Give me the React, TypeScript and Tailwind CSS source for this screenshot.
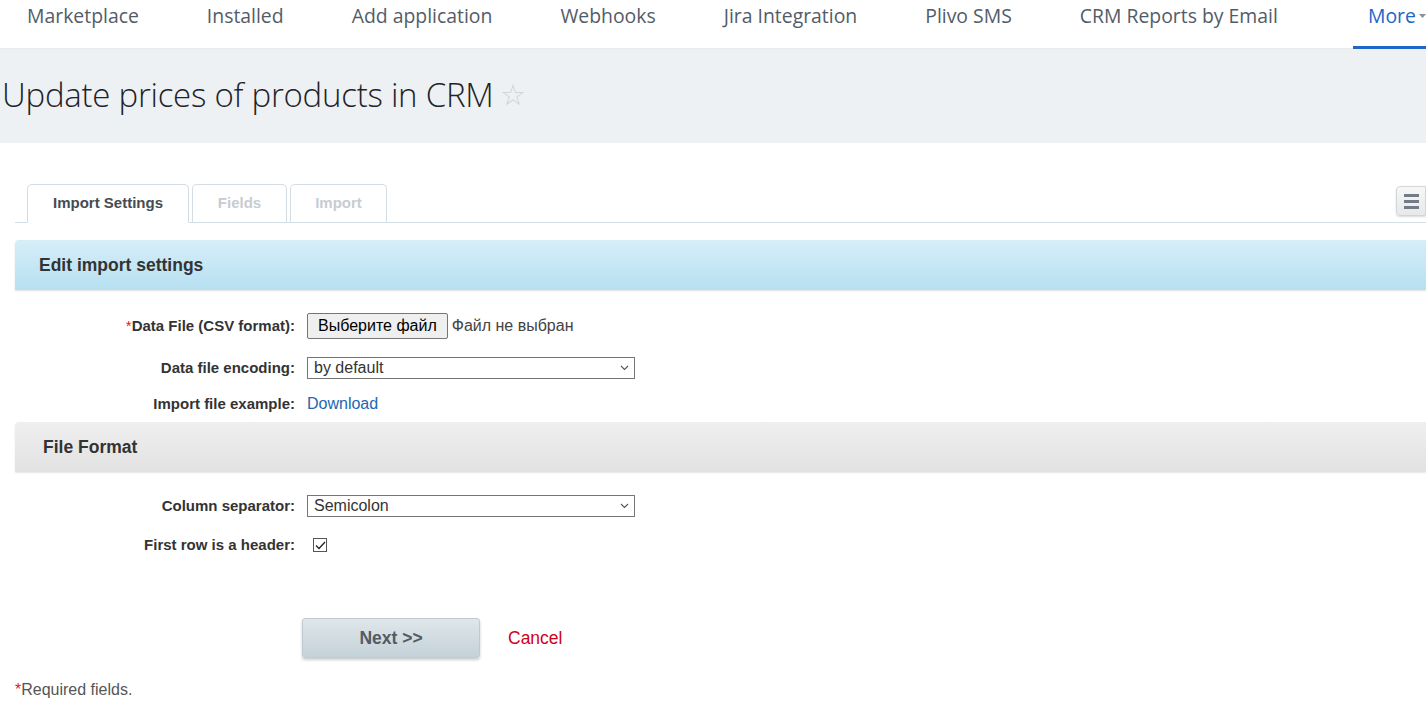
import React from 'react';

const navItems = ['Marketplace', 'Installed', 'Add application', 'Webhooks', 'Jira Integration', 'Plivo SMS', 'CRM Reports by Email'];

const Label: React.FC<{ children: React.ReactNode; required?: boolean }> = ({ children, required }) => (
    <div className="w-[295px] shrink-0 text-right text-[15px] font-bold text-[#333]">
        {required && <span className="text-[#e4171b] font-normal">*</span>}
        {children}
    </div>
);

const Select: React.FC<{ value: string }> = ({ value }) => (
    <div className="ml-3 w-[328px] h-[22px] border border-[#767676] bg-white flex items-center justify-between pl-[6px] pr-[5px] text-[16px] text-[#333]">
        <span>{value}</span>
        <svg width="9" height="6" viewBox="0 0 9 6" className="text-[#555]">
            <path d="M1 1l3.5 3.5L8 1" fill="none" stroke="currentColor" strokeWidth="1.1" />
        </svg>
    </div>
);

const App: React.FC = () => {
    return (
        <div className="min-h-screen bg-white font-['Liberation_Sans',Arial,sans-serif] overflow-hidden">
            {/* top navigation */}
            <div className="h-[49px] border-b border-[#e8ebee] flex items-stretch font-['Open_Sans',sans-serif] text-[19.4px] text-[#525c68]">
                <div className="flex items-start pl-[27px] pt-[1px]">
                    {navItems.map((item) => (
                        <span key={item} className="mr-[68px] whitespace-nowrap">{item}</span>
                    ))}
                </div>
                <div className="ml-auto w-[73px] border-b-[3px] border-[#2066c9] -mb-px flex items-start pl-[15px] pt-[1px] text-[#2066c9] whitespace-nowrap">
                    More
                    <svg width="7" height="4" viewBox="0 0 7 4" className="ml-[3px] mt-[13px]">
                        <path d="M0 0h7L3.5 4z" fill="#8a9099" />
                    </svg>
                </div>
            </div>

            {/* title */}
            <div className="h-[94px] bg-[#eef1f4] flex items-center pl-[2px] pb-[3px]">
                <h1 className="font-['Open_Sans',sans-serif] font-light text-[33px] text-[#1f2328] tracking-[-0.25px]">Update prices of products in CRM</h1>
                <span className="ml-[7px] text-[29px] text-[#cdd1d5] leading-none mt-[2px]">☆</span>
            </div>

            {/* tabs */}
            <div className="mt-[41px] ml-[15px] h-[39px] border-b border-[#d1dee5] flex items-end relative">
                <div className="ml-[12px] w-[162px] h-[39px] -mb-px bg-white border border-[#d5dde2] border-b-white rounded-t-[5px] flex items-center justify-center text-[15px] font-bold text-[#464c52]">Import Settings</div>
                <div className="ml-[3px] w-[95px] h-[38px] border border-[#d5dde2] border-b-0 rounded-t-[5px] flex items-center justify-center text-[15px] font-bold text-[#c8ccd0]">Fields</div>
                <div className="ml-[3px] w-[97px] h-[38px] border border-[#d5dde2] border-b-0 rounded-t-[5px] flex items-center justify-center text-[15px] font-bold text-[#c8ccd0]">Import</div>
                <div className="absolute right-0 top-[2px] w-[30px] h-[30px] rounded-l-[4px] border border-[#d3d6d9] bg-gradient-to-b from-[#f7f7f7] to-[#e6e8ea] shadow-[0_1px_2px_rgba(0,0,0,0.15)] flex flex-col items-center justify-center gap-[3px]">
                    <span className="w-[15px] h-[3px] bg-[#737c86]" />
                    <span className="w-[15px] h-[3px] bg-[#737c86]" />
                    <span className="w-[15px] h-[3px] bg-[#737c86]" />
                </div>
            </div>

            {/* edit import settings header */}
            <div className="mt-[17px] ml-[15px] h-[50px] rounded-tl-[4px] bg-gradient-to-b from-[#d6eef8] to-[#b6e0f1] shadow-[0_1px_2px_rgba(0,0,0,0.12)] flex items-center pl-[24px]">
                <span className="text-[17.5px] font-bold text-[#333]">Edit import settings</span>
            </div>

            <div className="pt-[23px]">
                <div className="h-[26px] flex items-center">
                    <Label required>Data File (CSV format):</Label>
                    <div className="ml-3 h-[26px] px-[10px] bg-[#efefef] border border-[#767676] rounded-[2px] flex items-center text-[16px] text-black">Выберите файл</div>
                    <span className="ml-[4px] text-[16px] text-[#444]">Файл не выбран</span>
                </div>
                <div className="mt-[18px] h-[22px] flex items-center">
                    <Label>Data file encoding:</Label>
                    <Select value="by default" />
                </div>
                <div className="mt-[15px] h-[20px] flex items-center">
                    <Label>Import file example:</Label>
                    <span className="ml-3 text-[16px] text-[#2067b0]">Download</span>
                </div>
            </div>

            {/* file format header */}
            <div className="mt-[8px] ml-[15px] h-[50px] rounded-tl-[4px] bg-gradient-to-b from-[#efefef] to-[#e2e2e2] shadow-[0_1px_2px_rgba(0,0,0,0.1)] flex items-center pl-[28px]">
                <span className="text-[17.5px] font-bold text-[#333]">File Format</span>
            </div>

            <div className="pt-[23px]">
                <div className="h-[22px] flex items-center">
                    <Label>Column separator:</Label>
                    <Select value="Semicolon" />
                </div>
                <div className="mt-[18px] h-[20px] flex items-center">
                    <Label>First row is a header:</Label>
                    <div className="ml-[18px] w-[14px] h-[14px] border border-[#555] bg-white flex items-center justify-center">
                        <svg width="11" height="9" viewBox="0 0 11 9">
                            <path d="M1 4.5l3 3L10 1" fill="none" stroke="#222" strokeWidth="1.3" />
                        </svg>
                    </div>
                </div>
            </div>

            {/* buttons */}
            <div className="mt-[63px] flex items-center">
                <button className="ml-[302px] w-[178px] h-[40px] rounded-[3px] border border-[#bfcbd1] bg-gradient-to-b from-[#dfe7ea] to-[#c4d2d9] shadow-[0_2px_3px_rgba(0,0,0,0.2)] text-[17.5px] font-bold text-[#535c64]">Next &gt;&gt;</button>
                <span className="ml-[28px] mt-[1px] text-[17.5px] text-[#d0021b]">Cancel</span>
            </div>

            <div className="mt-[20px] ml-[15px] text-[16px] text-[#555]">
                <span className="text-[#e4171b]">*</span>Required fields.
            </div>
        </div>
    );
};

export default App;
